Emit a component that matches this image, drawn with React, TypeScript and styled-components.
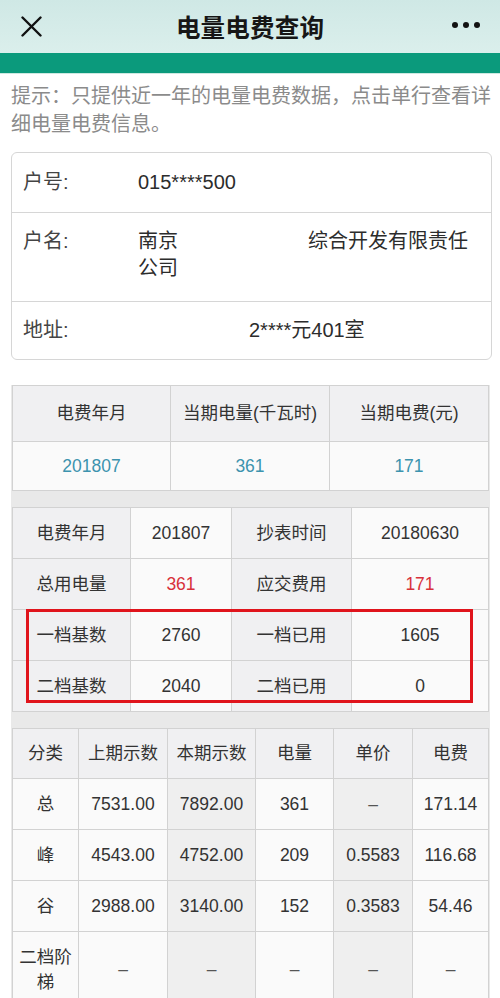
import styled, { createGlobalStyle } from 'styled-components';

const GlobalStyle = createGlobalStyle`
  html, body {
    margin: 0;
    padding: 0;
    background: #ffffff;
  }
  body {
    font-family: "Liberation Sans", "Noto Sans CJK SC", sans-serif;
    color: #333333;
  }
`;

const Page = styled.div`
  width: 500px;
  height: 998px;
  overflow: hidden;
  background: #ffffff;
`;

const NavBar = styled.header`
  height: 53px;
  display: grid;
  grid-template-columns: 80px 1fr 80px;
  align-items: center;
  background: linear-gradient(#cfe8e5, #dbefec);
`;

const CloseBtn = styled.button`
  border: none;
  background: none;
  padding: 0 0 0 21px;
  display: flex;
  align-items: center;
  height: 53px;
  cursor: pointer;
`;

const Title = styled.h1`
  margin: 0;
  text-align: center;
  font-family: "Noto Sans CJK SC", sans-serif;
  font-size: 24.5px;
  font-weight: 700;
  color: #161616;
  letter-spacing: 0.2px;
`;

const MoreBtn = styled.button`
  border: none;
  background: none;
  padding: 0 20px 4px 0;
  display: flex;
  justify-content: flex-end;
  align-items: center;
  height: 53px;
  cursor: pointer;
`;

const GreenBar = styled.div`
  height: 20px;
  background: #0b9a7c;
  border-bottom: 1px solid #cde9e1;
`;

const Hint = styled.p`
  margin: 0;
  padding: 7px 0 0 11px;
  font-family: "Noto Sans CJK SC", sans-serif;
  font-size: 20px;
  letter-spacing: 0;
  line-height: 28px;
  color: #8b8b8b;
`;

const InfoCard = styled.section`
  margin: 15px 8px 0 11px;
  border: 1px solid #d6d6d6;
  border-radius: 6px;
  overflow: hidden;
`;

const InfoRow = styled.div<{ $h: number; $top?: boolean }>`
  height: ${(p) => p.$h}px;
  display: flex;
  align-items: ${(p) => (p.$top ? 'flex-start' : 'center')};
  padding: ${(p) => (p.$top ? '15px 0 0 11px' : '0 0 0 11px')};
  box-sizing: border-box;
  font-family: "Liberation Sans", "Noto Sans CJK SC", sans-serif;
  font-size: 20px;
  line-height: 27px;
  & + & {
    border-top: 1px solid #d6d6d6;
  }
`;

const InfoLabel = styled.span`
  width: 115px;
  flex-shrink: 0;
  color: #444444;
`;

const InfoValue = styled.span`
  color: #2c2c2c;
`;

const Gap = styled.span<{ $w: number }>`
  display: inline-block;
  width: ${(p) => p.$w}px;
`;

const GreyZone = styled.div`
  margin: 25px 10px 0 11px;
  padding: 0 1px 16px;
  background: #e9e9e9;
  display: flex;
  flex-direction: column;
  gap: 16px;
`;

const Grid = styled.div<{ $cols: string }>`
  position: relative;
  display: grid;
  grid-template-columns: ${(p) => p.$cols};
  border-left: 1px solid #d2d2d2;
  border-top: 1px solid #d2d2d2;
`;

const Cell = styled.div<{ $h: number; $bg?: string; $color?: string }>`
  height: ${(p) => p.$h}px;
  box-sizing: border-box;
  border-right: 1px solid #d2d2d2;
  border-bottom: 1px solid #d2d2d2;
  background: ${(p) => p.$bg || '#fafafa'};
  color: ${(p) => p.$color || '#333333'};
  display: flex;
  align-items: center;
  justify-content: center;
  text-align: center;
  font-family: "Liberation Sans", "Noto Sans CJK SC", sans-serif;
  font-size: 17.5px;
  line-height: 25px;
  padding: 0 2px;
`;

const Mark = styled.div`
  position: absolute;
  left: 13px;
  top: 101px;
  width: 447px;
  height: 94px;
  box-sizing: border-box;
  border: 3px solid #e0141c;
  pointer-events: none;
`;

const HEAD = '#f0f0f2';
const SHADE = '#efefef';
const BLUE = '#3c93ae';
const RED = '#d8313a';

const detail = [
  ['电费年月', '201807', '抄表时间', '20180630'],
  ['总用电量', '361', '应交费用', '171'],
  ['一档基数', '2760', '一档已用', '1605'],
  ['二档基数', '2040', '二档已用', '0'],
];

const readings = [
  ['总', '7531.00', '7892.00', '361', '–', '171.14'],
  ['峰', '4543.00', '4752.00', '209', '0.5583', '116.68'],
  ['谷', '2988.00', '3140.00', '152', '0.3583', '54.46'],
  ['二档阶梯', '–', '–', '–', '–', '–'],
];

export default function App() {
  return (
    <Page>
      <GlobalStyle />
      <NavBar>
        <CloseBtn aria-label="关闭">
          <svg width="21" height="21" viewBox="0 0 21 21">
            <path d="M1.5 1.5 L19.5 19.5 M19.5 1.5 L1.5 19.5" stroke="#111" strokeWidth="2.4" strokeLinecap="round" />
          </svg>
        </CloseBtn>
        <Title>电量电费查询</Title>
        <MoreBtn aria-label="更多">
          <svg width="28" height="8" viewBox="0 0 28 8">
            <circle cx="3" cy="4" r="3" fill="#111" />
            <circle cx="14" cy="4" r="3" fill="#111" />
            <circle cx="25" cy="4" r="3" fill="#111" />
          </svg>
        </MoreBtn>
      </NavBar>
      <GreenBar />

      <Hint>提示：只提供近一年的电量电费数据，点击单行查看详细电量电费信息。</Hint>

      <InfoCard>
        <InfoRow $h={59}>
          <InfoLabel>户号:</InfoLabel>
          <InfoValue>015****500</InfoValue>
        </InfoRow>
        <InfoRow $h={89} $top>
          <InfoLabel>户名:</InfoLabel>
          <InfoValue>
            南京<Gap $w={130} />综合开发有限责任
            <br />
            公司
          </InfoValue>
        </InfoRow>
        <InfoRow $h={58}>
          <InfoLabel>地址:</InfoLabel>
          <InfoValue>
            <Gap $w={111} />2****元401室
          </InfoValue>
        </InfoRow>
      </InfoCard>

      <GreyZone>
        <Grid $cols="158px 159px 1fr">
          <Cell $h={56} $bg={HEAD}>电费年月</Cell>
          <Cell $h={56} $bg={HEAD}>当期电量(千瓦时)</Cell>
          <Cell $h={56} $bg={HEAD}>当期电费(元)</Cell>
          <Cell $h={49} $color={BLUE}>201807</Cell>
          <Cell $h={49} $color={BLUE}>361</Cell>
          <Cell $h={49} $color={BLUE}>171</Cell>
        </Grid>

        <Grid $cols="118px 101px 120px 1fr">
          {detail.map((row, r) =>
            row.map((text, c) => (
              <Cell
                key={`${r}-${c}`}
                $h={51}
                $bg={c % 2 === 0 ? HEAD : '#fafafa'}
                $color={r === 1 && c % 2 === 1 ? RED : undefined}
              >
                {text}
              </Cell>
            ))
          )}
          <Mark />
        </Grid>

        <Grid $cols="66px 89px 88px 78px 79px 1fr">
          {['分类', '上期示数', '本期示数', '电量', '单价', '电费'].map((h) => (
            <Cell key={h} $h={50} $bg={HEAD}>
              {h}
            </Cell>
          ))}
          {readings.map((row, r) =>
            row.map((text, c) => (
              <Cell
                key={`${r}-${c}`}
                $h={r === 3 ? 76 : 51}
                $bg={c === 2 || c === 4 ? SHADE : '#fafafa'}
                $color={text === '–' ? '#555555' : undefined}
              >
                {text}
              </Cell>
            ))
          )}
        </Grid>
      </GreyZone>
    </Page>
  );
}
